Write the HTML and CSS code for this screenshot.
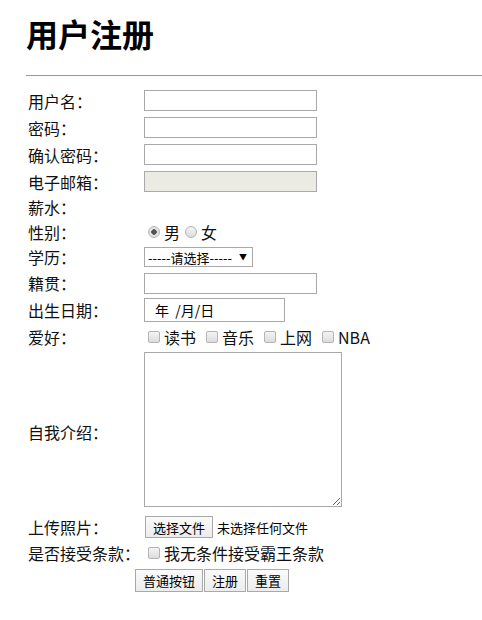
FILE: index.html
```
<!DOCTYPE html>
<html lang="zh-CN">

<head>
  <meta charset="UTF-8">
  <meta name="viewport" content="width=device-width, initial-scale=1.0">
  <title>用户注册</title>
  <link rel="stylesheet" href="styles.css">
</head>

<body>
  <div class="page">
    <h1 class="title">用户注册</h1>
    <hr class="rule">

    <form class="reg-form">
      <label class="field-label">用户名：</label>
      <div class="field"><input class="text-input" type="text"></div>

      <label class="field-label">密码：</label>
      <div class="field"><input class="text-input" type="password"></div>

      <label class="field-label">确认密码：</label>
      <div class="field"><input class="text-input" type="password"></div>

      <label class="field-label">电子邮箱：</label>
      <div class="field"><input class="text-input" type="text" disabled></div>

      <label class="field-label">薪水：</label>
      <div class="field"></div>

      <label class="field-label">性别：</label>
      <div class="field choices">
        <label class="choice"><input class="radio" type="radio" name="sex" checked>男</label>
        <label class="choice"><input class="radio" type="radio" name="sex">女</label>
      </div>

      <label class="field-label">学历：</label>
      <div class="field">
        <span class="select-wrap">
          <select class="select">
            <option>-----请选择-----</option>
            <option>本科</option>
            <option>硕士</option>
          </select>
        </span>
      </div>

      <label class="field-label">籍贯：</label>
      <div class="field"><input class="text-input" type="text"></div>

      <label class="field-label">出生日期：</label>
      <div class="field"><span class="date-box">年 &nbsp;/月/日</span></div>

      <label class="field-label">爱好：</label>
      <div class="field choices hobbies">
        <label class="choice"><input class="check" type="checkbox">读书</label>
        <label class="choice"><input class="check" type="checkbox">音乐</label>
        <label class="choice"><input class="check" type="checkbox">上网</label>
        <label class="choice"><input class="check" type="checkbox">NBA</label>
      </div>

      <label class="field-label">自我介绍：</label>
      <div class="field"><textarea class="intro"></textarea></div>

      <label class="field-label">上传照片：</label>
      <div class="field file-field">
        <button class="btn" type="button">选择文件</button>
        <span class="file-name">未选择任何文件</span>
      </div>

      <label class="field-label">是否接受条款：</label>
      <div class="field choices">
        <label class="choice"><input class="check" type="checkbox">我无条件接受霸王条款</label>
      </div>

      <div class="actions">
        <button class="btn" type="button">普通按钮</button>
        <button class="btn" type="submit">注册</button>
        <button class="btn reset" type="reset">重置</button>
      </div>
    </form>
  </div>
</body>

</html>
```

FILE: styles.css
```
* {
  box-sizing: border-box;
}

body {
  margin: 0;
  font-family: "Noto Sans CJK SC", "Noto Sans", sans-serif;
  font-size: 16px;
  color: #111;
  background: #fff;
}

.page {
  padding: 13px 0 0 26px;
}

.title {
  margin: 0;
  font-size: 32px;
  line-height: 40px;
  font-weight: 700;
  color: #000;
}

.rule {
  margin: 22px 0 0 0;
  border: 0;
  border-top: 1px solid #999;
  height: 0;
}

.reg-form {
  display: grid;
  grid-template-columns: 116px auto;
  grid-template-rows: 25px 25px 25px 25px 22px 24px 22px 26px 24px 26px 160px 26px 22px 28px;
  row-gap: 2px;
  align-items: center;
  margin-top: 12px;
  padding-left: 2px;
}

.field-label {
  white-space: nowrap;
  line-height: 20px;
}

.field {
  display: flex;
  align-items: center;
  min-height: 1px;
}

.text-input {
  width: 173px;
  height: 21px;
  margin: 0;
  padding: 1px 2px;
  border: 1px solid #a9a9a9;
  background: #fff;
  font: inherit;
}

.text-input:disabled {
  background: #ebebe4;
}

.choices {
  padding-left: 4px;
}

.choice {
  display: inline-flex;
  align-items: center;
  line-height: 20px;
  margin-right: 5px;
}

.hobbies .choice {
  margin-right: 10px;
}

.radio,
.check {
  appearance: none;
  margin: 0 4px 0 0;
  width: 12px;
  height: 12px;
  border: 1px solid #b4b4b4;
  background: linear-gradient(#f4f4f4, #dcdcdc);
}

.radio {
  border-radius: 50%;
}

.check {
  border-radius: 2px;
}

.radio:checked {
  background: radial-gradient(circle, #555 0, #555 2.5px, #e6e6e6 3px, #dcdcdc 100%);
}

.select-wrap {
  position: relative;
  display: inline-block;
}

.select-wrap::after {
  content: "▼";
  position: absolute;
  right: 6px;
  top: 6px;
  font-size: 8px;
  line-height: 8px;
  color: #000;
  pointer-events: none;
}

.select {
  appearance: none;
  display: block;
  width: 109px;
  height: 20px;
  margin: 0;
  padding: 0 0 0 3px;
  border: 1px solid #a9a9a9;
  border-radius: 0;
  background: #fff;
  font-family: inherit;
  font-size: 13px;
  color: #000;
}

.date-box {
  display: inline-block;
  width: 141px;
  height: 24px;
  padding: 0 0 0 10px;
  border: 1px solid #a9a9a9;
  font-size: 14px;
  line-height: 22px;
  color: #000;
}

.intro {
  display: block;
  width: 198px;
  height: 155px;
  margin: 0 0 5px 0;
  border: 1px solid #a9a9a9;
  font: inherit;
}

.file-field {
  gap: 4px;
  padding-left: 1px;
}

.file-name {
  font-size: 13px;
  color: #000;
}

.btn {
  height: 23px;
  margin: 0;
  padding: 0 7px;
  border: 1px solid #a9a9a9;
  border-radius: 0;
  background: linear-gradient(#fafafa, #ececec);
  font-family: inherit;
  font-size: 13px;
  color: #000;
}

.file-field .btn {
  height: 22px;
}

.actions {
  grid-column: 1 / 3;
  display: flex;
  gap: 1px;
  padding-left: 107px;
}
```
